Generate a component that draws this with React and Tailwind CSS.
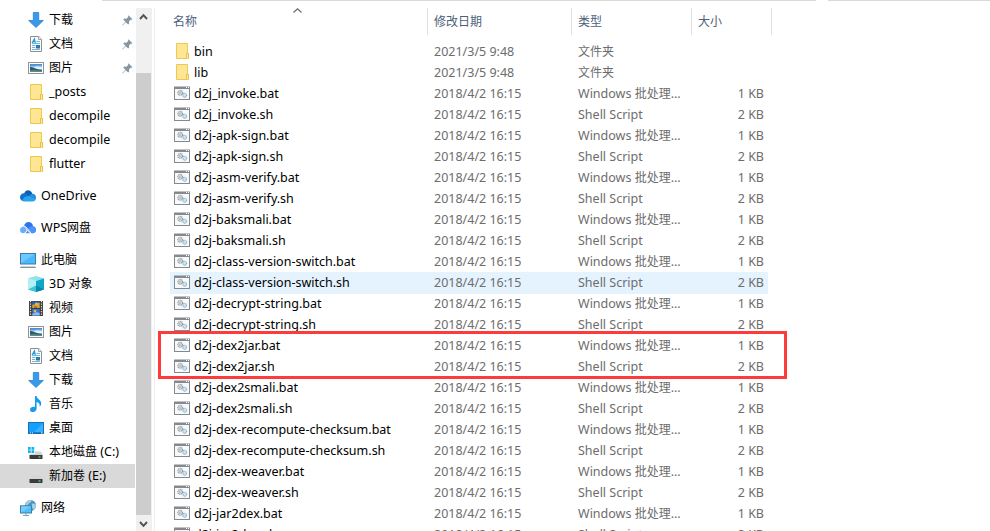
import React from "react";

const Svg = ({ children }) => (
  <svg width="16" height="16" viewBox="0 0 16 16" className="block shrink-0">
    {children}
  </svg>
);

const Folder = () => (
  <Svg>
    <path d="M2.500 .5h11v10h1v5h-12z" fill="#ffe694" stroke="#edc94f" />
    <path d="M12.500 15V10.500h2v5" fill="#ffeaa6" stroke="#e6bd3c" strokeWidth=".9" />
  </Svg>
);

const Download = () => (
  <Svg>
    <path d="M5.300.5h5.400v8h4.600L8 15.500.7 8.500h4.600z" fill="#3a99ea" stroke="#2b80cd" strokeWidth=".8" />
  </Svg>
);

const Doc = () => (
  <Svg>
    <path d="M2.500.5h8.300l2.700 2.700v12.300h-11z" fill="#fff" stroke="#8b8f93" />
    <path d="M10.500.5v3h3" fill="#eee" stroke="#8b8f93" strokeWidth=".8" />
    <path d="M4 7l2.500-4.300L7.300 7M5 5.600h2" fill="none" stroke="#1e90d2" strokeWidth="1.100" />
    <path d="M8.500 5.500H12M4 7.500H12M4 9.500h3.500M4 11.500h3.500M4 13.500h8" stroke="#5db0dc" strokeWidth=".9" />
    <rect x="8" y="9" width="4" height="3.500" fill="#2c7cab" />
  </Svg>
);

const Picture = () => (
  <Svg>
    <rect x=".5" y="2.500" width="15" height="11" fill="#fff" stroke="#8f9397" />
    <rect x="2" y="4" width="12" height="8" fill="#8bbdec" />
    <path d="M2 4h12v1.700c-3-.5-7 .2-12 .3z" fill="#4f8dd3" />
    <path d="M6 7.500c2-1.500 4-1 8-.5V9H7z" fill="#e4f0f8" />
    <path d="M2 7c3 0 6 2.500 12 3v2H2z" fill="#315a62" />
    <path d="M2 10.500c4-.8 8 0 12 .3V12H2z" fill="#5b8d92" />
  </Svg>
);

const OneDrive = () => (
  <Svg>
    <path d="M4 5.800C5.500 1.200 11 1.200 12.300 6L8 9z" fill="#0a5fb4" />
    <path d="M4.200 5.200C1.800 5.100 0 6.900 0 9.300c0 2 1.200 3.300 2.600 3.700L9 9 7 6.100a5 5 0 0 0-2.800-.9z" fill="#1170c9" />
    <path d="M8.200 8.600l3-2.600c2.600-1 4.800 1 4.800 3.500 0 .9-.2 1.600-.6 2.200z" fill="#1f8fe0" />
    <path d="M2 12.600c1.500-3.800 5-5 7.200-4L15.700 11.600c-.7 1.300-1.700 1.800-2.700 1.800H3.500c-.6 0-1-.4-1.500-.8z" fill="#2aa3ee" />
  </Svg>
);

const Wps = () => (
  <Svg>
    <path d="M4 6.500C4.300 3.700 6.300 2 8.500 2c2.600 0 4.300 1.900 4.500 4.300 1.900.4 3 1.800 3 3.500 0 2-1.500 3.400-3.500 3.400H11L5 6.800z" fill="#2f74f0" />
    <path d="M8 8.800C9.300 7 11 6 13 6.300c1.900.4 3 1.800 3 3.500 0 2-1.500 3.400-3.500 3.400-1 0-1.600-.5-2.200-1.200z" fill="#4f93f8" />
    <path d="M4.300 6.500C1.700 6.500 0 8 0 9.900c0 2 1.500 3.300 3.300 3.300 1.500 0 2.700-1 3.600-3z" fill="#69aefb" />
    <path d="M7.200 10.300l3 2.900H5.300z" fill="#4f93f8" />
    <path d="M4 6.200c2.800.2 4.300 4 7.300 7.200M4.600 13.200c1.200-.5 1.800-1.600 2.500-2.900" fill="none" stroke="#fff" strokeWidth=".9" />
  </Svg>
);

const Pc = () => (
  <Svg>
    <rect x=".5" y="1.500" width="15" height="10.500" fill="#4ab9fc" stroke="#3a7ca8" />
    <path d="M1 2h14L1 11z" fill="#7cd0ff" opacity=".7" />
    <path d="M1 14.500h14" stroke="#cfd6db" />
    <path d="M0 15.500h16" stroke="#8795a0" />
  </Svg>
);

const Cube = () => (
  <Svg>
    <path d="M8 0l8 2.300L8 5 0 2.300z" fill="#8ce4ec" />
    <path d="M0 2.300L8 5v11L0 13.500z" fill="#7fe0ea" />
    <path d="M16 2.300L8 5v11l8-2.500z" fill="#10a6c5" />
    <path d="M0 2.300L8 5v4.500L0 13.500z" fill="#b4eff3" />
    <path d="M0 13.500L8 9.500V16z" fill="#3ec6dc" />
    <path d="M8 9.500l8 4L8 16z" fill="#0788a8" />
  </Svg>
);

const Film = () => (
  <Svg>
    <rect x="1" y="1" width="14" height="15" fill="#3b3c40" />
    <path d="M2.500 1v15M13.500 1v15" stroke="#e8e8e8" strokeWidth="1.200" strokeDasharray="1.300 1.200" />
    <rect x="4.300" y="1.500" width="7.400" height="6.500" fill="#2d5fc4" />
    <rect x="4.300" y="9" width="7.400" height="6.500" fill="#3673d6" />
    <path d="M4.300 5c2-2 3 1 4 0s2-3 3.400-2v5H4.300z" fill="#d3a526" />
    <circle cx="8.500" cy="4" r="1.600" fill="#e8b83a" />
    <path d="M6 8c0-2 2-2.500 3-1v1z" fill="#cb4736" />
    <path d="M4.300 14c3-2.500 5-2 7.400-1v2.500H4.300z" fill="#8fb6e8" />
    <circle cx="7" cy="11" r="1.300" fill="#ebb33f" />
  </Svg>
);

const Music = () => (
  <Svg>
    <path d="M7 0h1.500c.4 3 4.700 4 4.700 7.200 0 1.700-.9 2.800-1.600 3.500.4-2.200-.1-4-3-4.600V12.500c0 2.200-1.700 3.500-3.600 3.500C3.300 16 2 15.200 2 13.700c0-2 2.200-3.400 5-2.900z" fill="#139cf0" />
  </Svg>
);

const Desktop = () => (
  <Svg>
    <rect x=".5" y="2.500" width="15" height="11" fill="#17a0fb" stroke="#1571b8" />
    <path d="M6 12.500L15 3v9.500z" fill="#39b1ff" />
    <path d="M1 13h14" stroke="#0b5d9f" />
    <path d="M2 13h1M4 13h1M13 13h1.500" stroke="#fff" />
  </Svg>
);

const Drive = ({ system }) => (
  <Svg>
    {system && <path d="M0 3h2.700v2.700H0zM3.500 3h2.700v2.700H3.500zM0 6.300h2.700V9H0zM3.500 6.300h2.700V9H3.500z" fill="#11b3ee" />}
    <path d={system ? "M7 7.500h6L15 11H2l.8-1.300H7z" : "M3.800 7.500h9.400L15 11H2z"} fill="#d3d5d7" />
    <rect x="1.500" y="11" width="13" height="4" rx=".4" fill="#393b3d" />
    <path d="M10.500 13h2" stroke="#52e26a" strokeWidth="1.300" />
  </Svg>
);

const Network = () => (
  <Svg>
    <circle cx="10.500" cy="5.500" r="5.500" fill="#4f94bd" />
    <path d="M7 1.500c2-2 4-1.500 5-1-1 1-1 2-2.500 2.500S8 6 6.500 6s-1-3 .5-4.500zM12 4c2-1 3 0 4 1 0 2-1 4-2.500 5-1-2-2.500-4-1.500-6z" fill="#a5cfe2" />
    <rect x=".5" y="5.800" width="11" height="7.200" fill="#52bdfc" stroke="#3981ac" />
    <path d="M1 6.300h10L1 12.500z" fill="#85d4ff" opacity=".7" />
    <path d="M3 15.500h6M6 13v2" stroke="#8ba0ad" />
  </Svg>
);

const Script = () => (
  <Svg>
    <rect x=".5" y="2" width="15" height="12.500" fill="#f8f9fa" stroke="#84898e" />
    <path d="M0 3h16" stroke="#84898e" strokeWidth="2" />
    <path d="M12 2.500h1M14 2.500h1" stroke="#fff" />
    <circle cx="6.200" cy="7.800" r="2.400" fill="#e3e6e8" stroke="#969ba0" strokeWidth="1.200" strokeDasharray="1.100 .5" />
    <circle cx="6.200" cy="7.800" r=".9" fill="#fff" stroke="#8c9297" strokeWidth=".6" />
    <circle cx="10.700" cy="10.300" r="1.900" fill="#cfe8f6" stroke="#86b0ca" strokeWidth="1.100" strokeDasharray=".9 .4" />
  </Svg>
);

const Pin = () => (
  <svg width="11" height="11" viewBox="0 0 11 11" className="mr-[2px] ml-auto block shrink-0">
    <path d="M6.500.3l4 4-1.200.5-.6-.1-1.700 1.800.1 2.200-1 .9-2.400-2.400L.6 10.400l-.3-.3L3.400 6.700 1.200 4.500l1-1 2.200.2 1.800-1.800-.1-.7z" fill="#8796a1" />
  </svg>
);

// Latin text runs slightly larger than the Chinese glyphs beside it.
const Label = ({ children }) =>
  children.split(/([\u4e00-\u9fff]+)/).map((part, i) =>
    i % 2 ? (
      <span key={i} className="text-[12px]">{part}</span>
    ) : (
      <React.Fragment key={i}>{part}</React.Fragment>
    )
  );

const nav = [
  { icon: <Download />, name: "下载", sub: true, pin: true },
  { icon: <Doc />, name: "文档", sub: true, pin: true },
  { icon: <Picture />, name: "图片", sub: true, pin: true },
  { icon: <Folder />, name: "_posts", sub: true },
  { icon: <Folder />, name: "decompile", sub: true },
  { icon: <Folder />, name: "decompile", sub: true },
  { icon: <Folder />, name: "flutter", sub: true },
  { icon: <OneDrive />, name: "OneDrive" },
  { icon: <Wps />, name: "WPS网盘" },
  { icon: <Pc />, name: "此电脑" },
  { icon: <Cube />, name: "3D 对象", sub: true },
  { icon: <Film />, name: "视频", sub: true },
  { icon: <Picture />, name: "图片", sub: true },
  { icon: <Doc />, name: "文档", sub: true },
  { icon: <Download />, name: "下载", sub: true },
  { icon: <Music />, name: "音乐", sub: true },
  { icon: <Desktop />, name: "桌面", sub: true },
  { icon: <Drive system />, name: "本地磁盘 (C:)", sub: true },
  { icon: <Drive />, name: "新加卷 (E:)", sub: true, active: true },
  { icon: <Network />, name: "网络" },
];

const files = [
  "bin",
  "lib",
  "d2j_invoke.bat",
  "d2j_invoke.sh",
  "d2j-apk-sign.bat",
  "d2j-apk-sign.sh",
  "d2j-asm-verify.bat",
  "d2j-asm-verify.sh",
  "d2j-baksmali.bat",
  "d2j-baksmali.sh",
  "d2j-class-version-switch.bat",
  "d2j-class-version-switch.sh",
  "d2j-decrypt-string.bat",
  "d2j-decrypt-string.sh",
  "d2j-dex2jar.bat",
  "d2j-dex2jar.sh",
  "d2j-dex2smali.bat",
  "d2j-dex2smali.sh",
  "d2j-dex-recompute-checksum.bat",
  "d2j-dex-recompute-checksum.sh",
  "d2j-dex-weaver.bat",
  "d2j-dex-weaver.sh",
  "d2j-jar2dex.bat",
  "d2j-jar2dex.sh",
];

function FileRow({ name }) {
  const folder = !name.includes(".");
  const bat = name.endsWith(".bat");
  const hovered = name === "d2j-class-version-switch.sh";
  return (
    <div className={`flex w-[598px] shrink-0 items-center text-[#6d6d6d] ${hovered ? "-mb-px h-[22px] bg-[#e5f3ff] pb-px" : "h-[21px]"}`}>
      <div className="flex w-[264px] items-center gap-1 pl-1 text-black">
        <div className="-mt-px">{folder ? <Folder /> : <Script />}</div>
        <span>{name}</span>
      </div>
      <span className="w-36">{folder ? "2021/3/5 9:48" : "2018/4/2 16:15"}</span>
      <span className="w-[120px]">
        <Label>{folder ? "文件夹" : bat ? "Windows 批处理..." : "Shell Script"}</Label>
      </span>
      <span className="w-[66px] text-right">{folder ? "" : bat ? "1 KB" : "2 KB"}</span>
    </div>
  );
}

export default function App() {
  return (
    <div className="relative flex h-[531px] w-[990px] flex-col overflow-hidden bg-white font-['Noto_Sans','Noto_Sans_CJK_SC',sans-serif] text-[12.5px] leading-[20px] whitespace-nowrap text-black">
      <div className="flex h-2 shrink-0 gap-3 pl-[102px]">
        <div className="h-px w-[714px] bg-[#d9d9d9]" />
        <div className="h-px flex-1 bg-[#d9d9d9]" />
      </div>
      <div className="flex min-h-0 flex-1">
        <nav className="w-[135px] shrink-0">
          {nav.map((n, i) => (
            <div
              key={i}
              className={`flex h-6 items-center gap-[5px] ${n.sub ? "pl-7" : "pl-5"} ${n.active ? "bg-[#d9d9d9]" : ""} ${
                ["OneDrive", "WPS网盘", "此电脑", "网络"].includes(n.name) ? "mt-2" : ""
              }`}
            >
              {n.icon}
              <span><Label>{n.name}</Label></span>
              {n.pin && <Pin />}
            </div>
          ))}
        </nav>
        <div className="ml-px flex w-4 shrink-0 flex-col bg-[#f0f0f0]">
          <svg width="16" height="65" viewBox="0 0 16 65" className="shrink-0">
            <path d="M4 11l3.500-3.800L11 11" fill="none" stroke="#505050" strokeWidth="1.900" />
          </svg>
          <div className="h-[442px] w-[15px] shrink-0 bg-[#cdcdcd]" />
          <svg width="16" height="16" viewBox="0 0 16 16" className="shrink-0">
            <path d="M4 7l3.500 3.800L11 7" fill="none" stroke="#505050" strokeWidth="1.900" />
          </svg>
        </div>
        <div className="ml-0.5 w-px shrink-0 bg-[#efefef]" />
        <main className="flex min-w-0 flex-1 flex-col">
          <div className="flex h-[33px] shrink-0 text-[12px] text-[#4c607a]">
            <div className="flex h-[27px] w-[273px] border-r border-[#e2e2e2] pt-1 pl-[18px]">
              <span>名称</span>
              <svg width="9" height="5" viewBox="0 0 9 5" className="-mt-1 ml-[96px]">
                <path d="M.5 4.500l4-3.700 4 3.700" fill="none" stroke="#686868" strokeWidth="1.100" />
              </svg>
            </div>
            <div className="h-[27px] w-36 border-r border-[#e2e2e2] pt-1 pl-1.5">修改日期</div>
            <div className="h-[27px] w-[120px] border-r border-[#e2e2e2] pt-1 pl-1.5">类型</div>
            <div className="h-[27px] w-20 border-r border-[#e2e2e2] pt-1 pl-1.5">大小</div>
          </div>
          <div className="flex min-h-0 flex-1 flex-col overflow-hidden pl-[15px]">
            {files.map((f) => (
              <FileRow key={f} name={f} />
            ))}
          </div>
        </main>
      </div>
      <div className="absolute top-[331px] left-[158px] h-12 w-[629px] border-3 border-[#fc3b3a]" />
    </div>
  );
}
